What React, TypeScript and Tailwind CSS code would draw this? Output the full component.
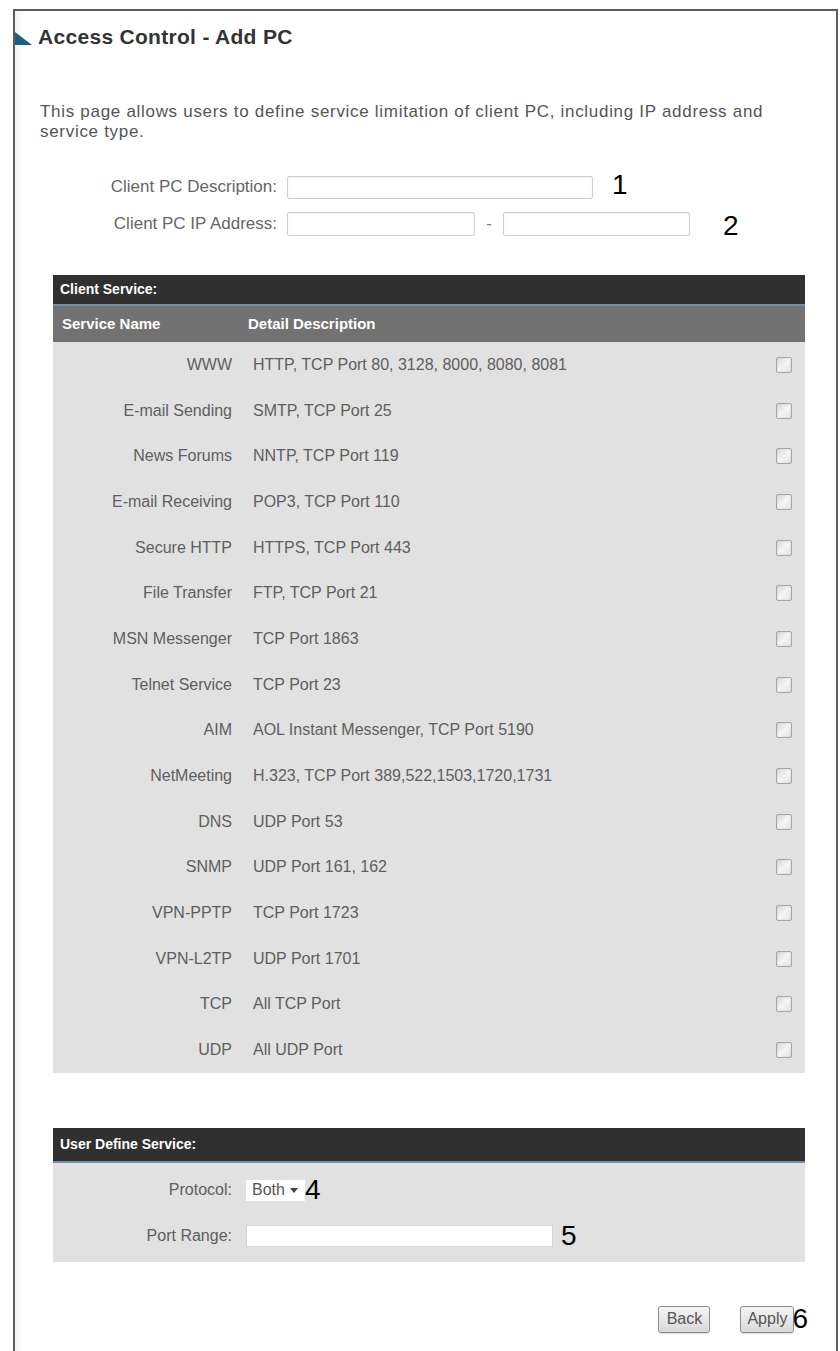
const services: [string, string][] = [
  ["WWW", "HTTP, TCP Port 80, 3128, 8000, 8080, 8081"],
  ["E-mail Sending", "SMTP, TCP Port 25"],
  ["News Forums", "NNTP, TCP Port 119"],
  ["E-mail Receiving", "POP3, TCP Port 110"],
  ["Secure HTTP", "HTTPS, TCP Port 443"],
  ["File Transfer", "FTP, TCP Port 21"],
  ["MSN Messenger", "TCP Port 1863"],
  ["Telnet Service", "TCP Port 23"],
  ["AIM", "AOL Instant Messenger, TCP Port 5190"],
  ["NetMeeting", "H.323, TCP Port 389,522,1503,1720,1731"],
  ["DNS", "UDP Port 53"],
  ["SNMP", "UDP Port 161, 162"],
  ["VPN-PPTP", "TCP Port 1723"],
  ["VPN-L2TP", "UDP Port 1701"],
  ["TCP", "All TCP Port"],
  ["UDP", "All UDP Port"],
];

const inputCls =
  "border border-[#cfcfcf] rounded-[2px] bg-white shadow-[inset_0_1px_2px_rgba(0,0,0,0.08)]";

function Num({ n, className = "" }: { n: string; className?: string }) {
  return <span className={`text-[28px] leading-none text-black ${className}`}>{n}</span>;
}

function Checkbox() {
  return (
    <span className="block w-[16px] h-[16px] border border-[#a5a5a5] rounded-[2px] bg-gradient-to-br from-[#d8d8d8] via-[#f4f4f4] to-[#e2e2e2] shadow-[inset_0_0_1px_rgba(0,0,0,0.25)]" />
  );
}

function SectionBar({ title, h }: { title: string; h: string }) {
  return (
    <div className={`${h} bg-[#303030] border-b-2 border-[#6f8fab] flex items-center pl-[7px]`}>
      <span className="text-white font-bold text-[14px]">{title}</span>
    </div>
  );
}

export default function App() {
  return (
    <div className="w-[840px] h-[1351px] overflow-hidden bg-white pt-[9px] pl-[13px] font-['Liberation_Sans',Arial,sans-serif]">
      <div className="w-[825px] h-[1400px] border-l-2 border-t-2 border-r-2 border-[#5c5c5c] shadow-[inset_10px_0_10px_-8px_rgba(0,0,0,0.08)]">
        {/* Title */}
        <div className="pt-[14px] flex items-center">
          <svg width="17" height="13" viewBox="0 0 17 13" className="mt-[2px]">
            <polygon points="0,0 0,13 17,13" fill="#1d5f7e" />
          </svg>
          <h1 className="ml-[6px] text-[21px] leading-[24px] font-bold tracking-[0.3px] text-[#333]">
            Access Control - Add PC
          </h1>
        </div>

        <p className="mt-[53px] ml-[25px] w-[750px] text-[17px] leading-[20px] tracking-[0.7px] text-[#555]">
          This page allows users to define service limitation of client PC, including IP address and service type.
        </p>

        {/* Client PC form */}
        <div className="mt-[33px] h-[24px] flex items-center">
          <label className="w-[262px] text-right text-[17px] text-[#666]">Client PC Description:</label>
          <div className={`ml-[10px] w-[306px] h-[23px] ${inputCls}`} />
          <Num n="1" className="ml-[19px] -mt-[4px]" />
        </div>
        <div className="mt-[13px] h-[24px] flex items-center">
          <label className="w-[262px] text-right text-[17px] text-[#666]">Client PC IP Address:</label>
          <div className={`ml-[10px] w-[188px] h-[24px] ${inputCls}`} />
          <span className="w-[28px] text-center text-[16px] text-[#777]">-</span>
          <div className={`w-[187px] h-[24px] ${inputCls}`} />
          <Num n="2" className="ml-[33px] mt-[4px]" />
        </div>

        {/* Client Service table */}
        <div className="mt-[39px] ml-[38px] w-[752px]">
          <SectionBar title="Client Service:" h="h-[31px]" />
          <div className="h-[36px] bg-[#727272] flex items-center text-white font-bold text-[15px]">
            <span className="w-[186px] pl-[9px]">Service Name</span>
            <span className="pl-[9px]">Detail Description</span>
          </div>
          <div className="bg-[#e1e1e1]">
            {services.map(([name, desc]) => (
              <div key={name} className="h-[45.7px] flex items-center text-[16px] text-[#5e5e5e]">
                <span className="w-[186px] pr-[7px] text-right">{name}</span>
                <span className="flex-1 pl-[14px]">{desc}</span>
                <span className="pr-[13px]">
                  <Checkbox />
                </span>
              </div>
            ))}
          </div>
        </div>

        {/* User Define Service */}
        <div className="mt-[55px] ml-[38px] w-[752px]">
          <SectionBar title="User Define Service:" h="h-[35px]" />
          <div className="bg-[#e1e1e1] pt-[4px] pb-[3px] text-[16px] text-[#5e5e5e]">
            <div className="h-[46px] flex items-center">
              <span className="w-[186px] pr-[7px] text-right">Protocol:</span>
              <div className="ml-[7px] w-[59px] h-[21px] bg-white flex items-center pl-[6px] text-[#555]">
                <span>Both</span>
                <svg width="8" height="5" viewBox="0 0 8 5" className="ml-[5px]">
                  <polygon points="0,0 8,0 4,5" fill="#444" />
                </svg>
              </div>
              <Num n="4" />
            </div>
            <div className="h-[46px] flex items-center">
              <span className="w-[186px] pr-[7px] text-right">Port Range:</span>
              <div className="ml-[7px] w-[307px] h-[22px] border border-[#d4d4d4] bg-white" />
              <Num n="5" className="ml-[8px]" />
            </div>
          </div>
        </div>

        {/* Buttons */}
        <div className="mt-[43px] flex justify-end items-center pr-[28px]">
          <button className="w-[52px] h-[27px] border border-[#8d8d8d] rounded-[3px] bg-gradient-to-b from-[#f5f5f5] to-[#d9d9d9] text-[16px] text-[#555] shadow-[0_1px_1px_rgba(0,0,0,0.15)]">
            Back
          </button>
          <button className="ml-[30px] w-[54px] h-[27px] border border-[#8d8d8d] rounded-[3px] bg-gradient-to-b from-[#f5f5f5] to-[#d9d9d9] text-[16px] text-[#555] shadow-[0_1px_1px_rgba(0,0,0,0.15)]">
            Apply
          </button>
          <Num n="6" className="-ml-[2px]" />
        </div>
      </div>
    </div>
  );
}
